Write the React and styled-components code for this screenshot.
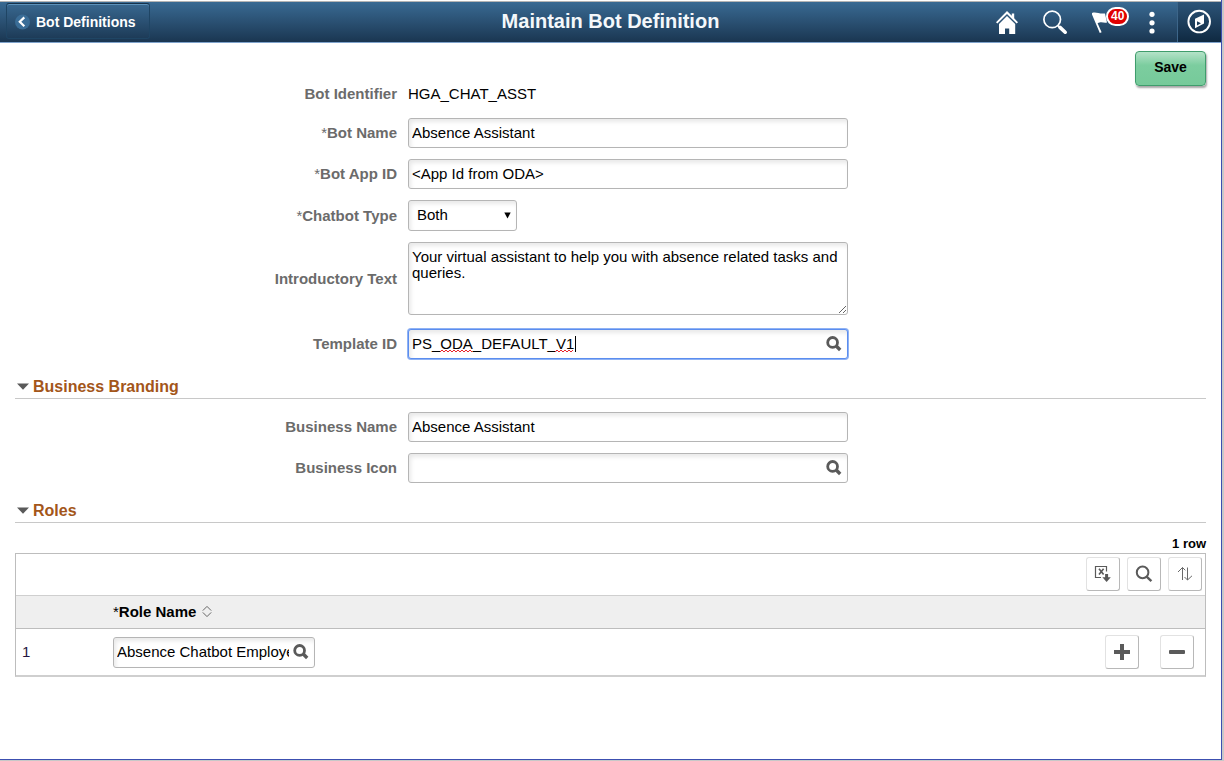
import React, { useState } from 'react';
import styled, { createGlobalStyle, css } from 'styled-components';

const GlobalStyle = createGlobalStyle`
  * {
    box-sizing: border-box;
  }

  body {
    margin: 0;
    background: #c8c8c8;
    color: #000;
    font-family: 'Liberation Sans', Arial, sans-serif;
    font-size: 15px;
    line-height: 16px;
  }

  button, input, select, textarea {
    font: inherit;
    color: inherit;
    margin: 0;
  }
`;

const Backdrop = styled.div`
  display: flex;
  flex-direction: column;
  min-height: 100vh;
  padding: 0 2px 1px 0;
`;

const Window = styled.div`
  flex: 1;
  background: #fff;
  border: solid #3c4fb0;
  border-width: 0 1px 1px 0;
`;

const Header = styled.header`
  display: grid;
  grid-template-columns: 1fr auto 1fr;
  height: 42px;
  margin-top: 1px;
  border-top: 1px solid #b4b4b4;
  border-bottom: 1px solid #7fa3cc;
  background: linear-gradient(#396a93, #2a5072 50%, #1a3651);
  color: #fff;
`;

const BackButton = styled.button`
  justify-self: start;
  display: flex;
  align-items: center;
  gap: 6px;
  height: 36px;
  margin: 1px 0 0 6px;
  padding: 2px 13px 0 8px;
  border: 1px solid #1f4564;
  border-top-color: #16324b;
  border-radius: 3px;
  background: transparent;
  box-shadow: inset 0 1px 0 #5d92ba;
  font-size: 14px;
  font-weight: bold;
  cursor: pointer;
`;

const Title = styled.h1`
  margin: 0;
  font-size: 20px;
  line-height: 39px;
  color: #f4f8fb;
`;

const HeaderActions = styled.div`
  display: flex;
  justify-self: end;
`;

const HeaderButton = styled.button`
  position: relative;
  display: flex;
  align-items: center;
  justify-content: center;
  width: ${props => props.$width || 48}px;
  padding: 0;
  border: 0;
  background: transparent;
  cursor: pointer;

  ${props => props.$navbar && css`
    border-left: 1px solid #3d668a;
    background: linear-gradient(#2c5478, #0f2941);
  `}
`;

const Badge = styled.span`
  position: absolute;
  top: 5px;
  left: 27px;
  padding: 0 3px;
  border: 2px solid #fff;
  border-radius: 10px;
  background: #e00000;
  font-size: 12px;
  font-weight: bold;
  line-height: 15px;
`;

const Content = styled.main`
  padding: 8px 15px 24px;
`;

const ActionBar = styled.div`
  display: flex;
  justify-content: flex-end;
`;

const SaveButton = styled.button`
  width: 71px;
  height: 35px;
  padding: 0 0 3px;
  border: 1px solid #3f9d6c;
  border-radius: 4px;
  background: linear-gradient(#b4e2c8, #7ccd9f 40%, #76ca9a);
  box-shadow: 1px 2px 2px rgba(0, 0, 0, 0.35);
  font-size: 14px;
  font-weight: bold;
  cursor: pointer;
`;

const Fields = styled.div`
  display: flex;
  flex-direction: column;
  gap: 11px;
`;

const FieldRow = styled.div`
  display: grid;
  grid-template-columns: 382px minmax(0, 440px);
  column-gap: 11px;
  align-items: center;
  padding-bottom: ${props => props.$spaceAfter || 0}px;
`;

const Label = styled.label`
  color: #6b6b6b;
  font-weight: bold;
  text-align: right;
`;

const Asterisk = styled.span`
  font-weight: normal;
`;

const fieldBox = css`
  border: 1px solid #b5b5b5;
  border-radius: 3px;
  background: #fff;
  box-shadow: inset 2px 3px 4px rgba(0, 0, 0, 0.09);
  outline: none;
`;

const Control = styled.div`
  position: relative;
  width: ${props => props.$width || '100%'};
`;

const TextInput = styled.input`
  ${fieldBox}
  display: block;
  width: 100%;
  height: ${props => props.$height || 30}px;
  padding: 0 ${props => (props.$lookup ? 25 : 3)}px 2px 3px;

  ${props => props.$active && css`
    border-color: #5b8def;
    box-shadow: 0 0 0 1px #8fb2f4, inset 2px 3px 4px rgba(0, 0, 0, 0.09);
  `}
`;

const TextArea = styled.textarea`
  ${fieldBox}
  display: block;
  width: 100%;
  height: 73px;
  padding: 6px 3px;
  resize: both;
`;

const Select = styled.select`
  ${fieldBox}
  display: block;
  width: 100%;
  height: 31px;
  padding: 0 20px 2px 8px;
  appearance: none;
`;

const SelectArrow = styled.svg`
  position: absolute;
  top: 12px;
  right: 6px;
  pointer-events: none;
`;

const LookupButton = styled.button`
  position: absolute;
  top: 0;
  bottom: 0;
  right: 5px;
  display: flex;
  align-items: center;
  padding: 0;
  border: 0;
  background: transparent;
  cursor: pointer;
`;

const SpellMarks = styled.svg`
  position: absolute;
  top: 6px;
  left: 5px;
  pointer-events: none;
`;

const SectionTitle = styled.h2`
  margin: 0 0 13px;
  border-bottom: 1px solid #c8c8c8;
  font-size: 16px;
`;

const SectionToggle = styled.button`
  display: flex;
  align-items: center;
  gap: 4px;
  width: 100%;
  height: 39px;
  padding: 16px 0 0 2px;
  border: 0;
  background: transparent;
  color: #a3561a;
  font-weight: bold;
  cursor: pointer;
`;

const RowCount = styled.p`
  margin: 0 0 1px;
  font-size: 13px;
  font-weight: bold;
  line-height: 16px;
  text-align: right;
`;

const Grid = styled.div`
  border: 1px solid #bdbdbd;
  border-bottom: 2px solid #cfcfcf;
`;

const GridToolbar = styled.div`
  display: flex;
  justify-content: flex-end;
  gap: 7px;
  height: 41px;
  padding: 3px 3px 0;
`;

const IconButton = styled.button`
  display: inline-flex;
  align-items: center;
  justify-content: center;
  width: 34px;
  height: 34px;
  padding: 0;
  border: 1px solid #e2e2e2;
  border-right-color: #b8b8b8;
  border-bottom-color: #b8b8b8;
  border-radius: 3px;
  background: #fff;
  cursor: pointer;
`;

const Table = styled.table`
  width: 100%;
  border-collapse: separate;
  border-spacing: 0;
  table-layout: fixed;
`;

const HeadCell = styled.th`
  width: ${props => props.$width || 'auto'};
  height: 34px;
  padding: 0 0 1px;
  border-top: 1px solid #cfcfcf;
  border-bottom: 1px solid #bdbdbd;
  background: #efefef;
  text-align: left;
`;

const SortButton = styled.button`
  display: flex;
  align-items: center;
  gap: 6px;
  padding: 0;
  border: 0;
  background: transparent;
  font-weight: bold;
  cursor: pointer;
`;

const Cell = styled.td`
  height: 46px;
  padding: 0;
`;

const RowNumber = styled.span`
  padding-left: 6px;
  color: #241540;
`;

const RowActions = styled.div`
  display: flex;
  justify-content: flex-end;
  gap: 21px;
  padding-right: 11px;
`;

const LookupIcon = () => (
  <svg width="18" height="18" viewBox="0 0 18 18" fill="none" stroke="#5a5a5a">
    <circle cx="7.6" cy="7.4" r="4.9" strokeWidth="2.8" />
    <path d="M11 10.8L15.2 15" strokeWidth="3.4" />
  </svg>
);

const TriangleIcon = () => (
  <svg width="12" height="7" viewBox="0 0 12 7">
    <path d="M0 0.5h12L6 6.7z" fill="#5a5a5a" />
  </svg>
);

const HomeIcon = () => (
  <svg width="24" height="26" viewBox="0 0 24 26">
    <path d="M12 2L1 13.2l1.4 1.3L12 4.9l9.6 9.6 1.4-1.3-3.8-3.9V4.4h-2.4v2.4z" fill="#fff" />
    <path d="M12 7L4 15v9.9h6v-5.3h4.2v5.3h6V15z" fill="#fff" />
  </svg>
);

const SearchIcon = () => (
  <svg width="26" height="26" viewBox="0 0 26 26" fill="none" stroke="#fff">
    <circle cx="10.2" cy="10.4" r="8.3" strokeWidth="1.7" />
    <path d="M15.8 16.6l2.6 2.4" strokeWidth="1.8" />
    <path d="M18 18.4l5.2 4.8" strokeWidth="3.6" strokeLinecap="round" />
  </svg>
);

const FlagIcon = () => (
  <svg width="40" height="24" viewBox="0 0 40 24">
    <path d="M9 3c4-1.6 7 1.2 13 0.4l2 9c-3 1.4-5-1.6-9.4 0.9l4 8.9-1.8 0.8L9 4.4z" fill="#fff" />
  </svg>
);

const DotsIcon = () => (
  <svg width="8" height="24" viewBox="0 0 8 24" fill="#fff">
    <circle cx="4" cy="4.3" r="2.6" />
    <circle cx="4" cy="12.8" r="2.6" />
    <circle cx="4" cy="21" r="2.6" />
  </svg>
);

const CompassIcon = () => (
  <svg width="26" height="26" viewBox="0 0 26 26">
    <circle cx="12.2" cy="12.6" r="10.8" fill="none" stroke="#fff" strokeWidth="1.9" />
    <path fillRule="evenodd" d="M17 5.6v8.8L8 19.2V9.8zM10 12.2v4.2l4-2.1z" fill="#fff" />
  </svg>
);

const BackIcon = () => (
  <svg width="15" height="16" viewBox="0 0 15 16">
    <circle cx="7.5" cy="8" r="7.5" fill="#3a6d97" />
    <path d="M9.3 3.4L4.8 7.8l4.5 4.4" fill="none" stroke="#fff" strokeWidth="2.2" />
  </svg>
);

const ExportIcon = () => (
  <svg width="18" height="18" viewBox="0 0 18 18" fill="none" stroke="#5a5a5a">
    <path d="M12.5 6.5V1.5h-11v11h5.5" strokeWidth="1.2" />
    <path d="M5 3.8l4.6 5.8M9.6 3.8L5 9.6" strokeWidth="1.6" />
    <path d="M12.6 9v4" strokeWidth="3" />
    <path d="M8.4 12.2h8.4L12.6 17z" fill="#5a5a5a" stroke="none" />
  </svg>
);

const FindIcon = () => (
  <svg width="20" height="20" viewBox="0 0 20 20" fill="none" stroke="#5a5a5a">
    <circle cx="8.6" cy="8.4" r="5.8" strokeWidth="2" />
    <path d="M12.6 12.6l4.8 4.6" strokeWidth="2.4" />
  </svg>
);

const SortRowsIcon = () => (
  <svg width="18" height="16" viewBox="0 0 18 16" fill="none" stroke="#6a6a6a" strokeWidth="1">
    <path d="M6.5 14V1.5M2 6l4.5-4.5 2.8 2.8" />
    <path d="M11.5 1.5V14M16 9.8L11.5 14 8.5 11" />
  </svg>
);

const SortIcon = () => (
  <svg width="10" height="14" viewBox="0 0 10 14" fill="none" stroke="#666">
    <path d="M0.8 5.6L5 1.4l4.2 4.2M0.8 7.4L5 11.6l4.2-4.2" />
  </svg>
);

const PlusIcon = () => (
  <svg width="16" height="16" viewBox="0 0 16 16">
    <path d="M6 0h4v6h6v4h-6v6H6v-6H0V6h6z" fill="#5a5a5a" />
  </svg>
);

const MinusIcon = () => (
  <svg width="16" height="16" viewBox="0 0 16 16">
    <rect y="6" width="16" height="4" rx="1" fill="#5a5a5a" />
  </svg>
);

const Field = ({ id, label, required, spaceAfter, children }) => (
  <FieldRow $spaceAfter={spaceAfter}>
    <Label htmlFor={id}>
      {required && <Asterisk>*</Asterisk>}
      {label}
    </Label>
    {children}
  </FieldRow>
);

const Section = ({ title, children }) => {
  const [open, setOpen] = useState(true);

  return (
    <section>
      <SectionTitle>
        <SectionToggle aria-expanded={open} onClick={() => setOpen(!open)}>
          <TriangleIcon />
          {title}
        </SectionToggle>
      </SectionTitle>
      {open && children}
    </section>
  );
};

const App = () => {
  const [bot, setBot] = useState({
    name: 'Absence Assistant',
    appId: '<App Id from ODA>',
    type: 'Both',
    intro: 'Your virtual assistant to help you with absence related tasks and queries.',
    template: 'PS_ODA_DEFAULT_V1',
    businessName: 'Absence Assistant',
    businessIcon: '',
  });
  const [roles, setRoles] = useState(['Absence Chatbot Employee']);

  const bind = (key) => ({
    id: key,
    value: bot[key],
    onChange: (e) => setBot({ ...bot, [key]: e.target.value }),
  });

  return (
    <Backdrop>
      <GlobalStyle />
      <Window>
        <Header>
          <BackButton>
            <BackIcon />
            Bot Definitions
          </BackButton>
          <Title>Maintain Bot Definition</Title>
          <HeaderActions>
            <HeaderButton aria-label="Home"><HomeIcon /></HeaderButton>
            <HeaderButton aria-label="Search"><SearchIcon /></HeaderButton>
            <HeaderButton aria-label="Notifications">
              <FlagIcon />
              <Badge>40</Badge>
            </HeaderButton>
            <HeaderButton $width={50} aria-label="Actions"><DotsIcon /></HeaderButton>
            <HeaderButton $width={44} $navbar aria-label="NavBar"><CompassIcon /></HeaderButton>
          </HeaderActions>
        </Header>

        <Content>
          <ActionBar>
            <SaveButton>Save</SaveButton>
          </ActionBar>

          <Fields>
            <Field id="identifier" label="Bot Identifier" spaceAfter={5}>
              <output id="identifier">HGA_CHAT_ASST</output>
            </Field>
            <Field id="name" label="Bot Name" required>
              <TextInput {...bind('name')} />
            </Field>
            <Field id="appId" label="Bot App ID" required>
              <TextInput {...bind('appId')} />
            </Field>
            <Field id="type" label="Chatbot Type" required>
              <Control $width="109px">
                <Select {...bind('type')}>
                  <option>Both</option>
                  <option>Employee</option>
                  <option>Manager</option>
                </Select>
                <SelectArrow width="7" height="7" viewBox="0 0 7 7">
                  <path d="M0.3 0.5h6.4L3.5 6.5z" />
                </SelectArrow>
              </Control>
            </Field>
            <Field id="intro" label="Introductory Text" spaceAfter={3}>
              <TextArea {...bind('intro')} />
            </Field>
            <Field id="template" label="Template ID">
              <Control>
                <TextInput {...bind('template')} $lookup $active spellCheck={false} />
                {/* misspelling underlines and the text cursor */}
                <SpellMarks width="164" height="20" viewBox="0 0 164 20">
                  <path
                    d="M27 17l2-2 2 2 2-2 2 2 2-2 2 2 2-2 2 2 2-2 2 2 2-2 2 2 2-2 2 2 2-2 2 2M142 17l2-2 2 2 2-2 2 2 2-2 2 2 2-2 2 2 2-2"
                    fill="none"
                    stroke="#e8262c"
                  />
                  <rect x="162" y="1" width="1" height="16" />
                </SpellMarks>
                <LookupButton aria-label="Look up Template ID"><LookupIcon /></LookupButton>
              </Control>
            </Field>
          </Fields>

          <Section title="Business Branding">
            <Fields>
              <Field id="businessName" label="Business Name">
                <TextInput {...bind('businessName')} />
              </Field>
              <Field id="businessIcon" label="Business Icon">
                <Control>
                  <TextInput {...bind('businessIcon')} $lookup />
                  <LookupButton aria-label="Look up Business Icon"><LookupIcon /></LookupButton>
                </Control>
              </Field>
            </Fields>
          </Section>

          <Section title="Roles">
            <RowCount>{roles.length} row</RowCount>
            <Grid>
              <GridToolbar>
                <IconButton aria-label="Download to Excel"><ExportIcon /></IconButton>
                <IconButton aria-label="Find"><FindIcon /></IconButton>
                <IconButton aria-label="Sort"><SortRowsIcon /></IconButton>
              </GridToolbar>
              <Table>
                <thead>
                  <tr>
                    <HeadCell $width="97px" />
                    <HeadCell>
                      <SortButton>
                        <span><Asterisk>*</Asterisk>Role Name</span>
                        <SortIcon />
                      </SortButton>
                    </HeadCell>
                    <HeadCell $width="120px" />
                  </tr>
                </thead>
                <tbody>
                  {roles.map((role, i) => (
                    <tr key={i}>
                      <Cell><RowNumber>{i + 1}</RowNumber></Cell>
                      <Cell>
                        <Control $width="202px">
                          <TextInput
                            aria-label="Role Name"
                            value={role}
                            onChange={(e) => setRoles(roles.map((r, j) => (j === i ? e.target.value : r)))}
                            $lookup
                            $height={31}
                          />
                          <LookupButton aria-label="Look up Role Name"><LookupIcon /></LookupButton>
                        </Control>
                      </Cell>
                      <Cell>
                        <RowActions>
                          <IconButton aria-label="Add row" onClick={() => setRoles([...roles, ''])}>
                            <PlusIcon />
                          </IconButton>
                          <IconButton
                            aria-label="Delete row"
                            onClick={() => setRoles(roles.filter((_, j) => j !== i))}
                          >
                            <MinusIcon />
                          </IconButton>
                        </RowActions>
                      </Cell>
                    </tr>
                  ))}
                </tbody>
              </Table>
            </Grid>
          </Section>
        </Content>
      </Window>
    </Backdrop>
  );
};

export default App;
